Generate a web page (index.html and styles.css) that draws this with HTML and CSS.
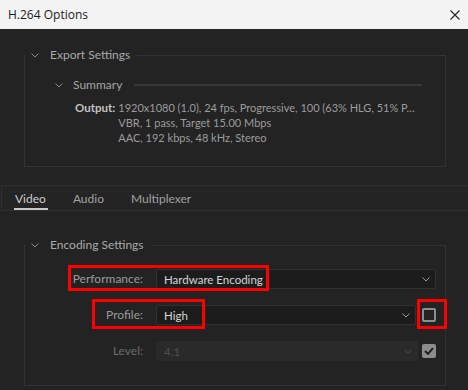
FILE: index.html
```html
<!DOCTYPE html>
<html>
<head>
<meta charset="utf-8">
<link rel="stylesheet" href="styles.css">
</head>
<body>
<div class="titlebar">
  <span class="title">H.264 Options</span>
  <svg class="close" width="10" height="10" viewBox="0 0 10 10"><path d="M0.5 0.5L9.5 9.5M9.5 0.5L0.5 9.5" stroke="#222" stroke-width="1.1" fill="none"/></svg>
</div>
<div class="main">
  <section class="group export">
    <div class="group-head">
      <svg class="chev" width="8" height="5" viewBox="0 0 8 5"><path d="M0.5 0.5L4 4L7.5 0.5" stroke="#8a8a8a" stroke-width="1" fill="none"/></svg>
      <span class="group-title">Export Settings</span>
      <span class="rule"></span>
    </div>
    <div class="sub-head">
      <svg class="chev" width="8" height="5" viewBox="0 0 8 5"><path d="M0.5 0.5L4 4L7.5 0.5" stroke="#8a8a8a" stroke-width="1" fill="none"/></svg>
      <span class="group-title">Summary</span>
      <span class="rule thick"></span>
    </div>
    <div class="summary">
      <span class="sum-label">Output:</span>
      <div class="sum-values">
        <div>1920x1080 (1.0), 24 fps, Progressive, 100 (63% HLG, 51% P…</div>
        <div>VBR, 1 pass, Target 15.00 Mbps</div>
        <div>AAC, 192 kbps, 48 kHz, Stereo</div>
      </div>
    </div>
  </section>

  <nav class="tabs">
    <span class="tab active">Video</span>
    <span class="tab">Audio</span>
    <span class="tab">Multiplexer</span>
  </nav>

  <section class="group encoding">
    <div class="group-head">
      <svg class="chev" width="8" height="5" viewBox="0 0 8 5"><path d="M0.5 0.5L4 4L7.5 0.5" stroke="#8a8a8a" stroke-width="1" fill="none"/></svg>
      <span class="group-title">Encoding Settings</span>
      <span class="rule"></span>
    </div>
    <div class="form">
      <label class="lbl">Performance:</label>
      <div class="select wide"><span>Hardware Encoding</span><svg width="8" height="5" viewBox="0 0 8 5"><path d="M0.5 0.5L4 4L7.5 0.5" stroke="#9a9a9a" stroke-width="1" fill="none"/></svg></div>

      <label class="lbl">Profile:</label>
      <div class="select"><span>High</span><svg width="8" height="5" viewBox="0 0 8 5"><path d="M0.5 0.5L4 4L7.5 0.5" stroke="#9a9a9a" stroke-width="1" fill="none"/></svg></div>
      <span class="check"></span>

      <label class="lbl dim">Level:</label>
      <div class="select disabled"><span>4.1</span><svg width="8" height="5" viewBox="0 0 8 5"><path d="M0.5 0.5L4 4L7.5 0.5" stroke="#4a4a4a" stroke-width="1" fill="none"/></svg></div>
      <span class="check checked"><svg width="10" height="8" viewBox="0 0 10 8"><path d="M1 4L4 6.8L9 1.2" stroke="#1e1e1e" stroke-width="2" fill="none"/></svg></span>
    </div>
    <div class="mark mark-perf"></div>
    <div class="mark mark-profile"></div>
    <div class="mark mark-check"></div>
  </section>
</div>
</body>
</html>
```

FILE: styles.css
```css
html, body {
  margin: 0;
  padding: 0;
}
body {
  width: 468px;
  height: 390px;
  overflow: hidden;
  background: #232323;
  font-family: Lato, "Noto Sans", sans-serif;
  font-size: 12px;
}
.titlebar {
  height: 29px;
  background: #f3f3f3;
  display: flex;
  align-items: center;
  justify-content: space-between;
  padding: 0 8px 0 8px;
  font-family: "Open Sans", "Noto Sans", sans-serif;
  font-size: 12px;
  color: #1b1b1b;
}
.close {
  display: block;
  margin-top: 1px;
}
.main {
  display: flex;
  flex-direction: column;
}
.group {
  position: relative;
  display: flex;
  flex-direction: column;
  border: 1px solid #333333;
  border-top: none;
  margin-left: 24px;
  margin-right: 22px;
}
.export {
  margin-top: 26px;
  padding-bottom: 21px;
}
.group-head, .sub-head {
  display: flex;
  align-items: center;
  height: 14px;
}
.group-head {
  margin-top: -7px;
  padding-left: 6px;
}
.chev {
  display: block;
  flex: none;
}
.group-title {
  color: #a9a9a9;
  margin-left: 11px;
  line-height: 14px;
  white-space: nowrap;
}
.rule {
  flex: 1;
  height: 1px;
  background: #333333;
  margin-left: 7px;
}
.rule.thick {
  height: 2px;
  background: #383838;
  margin-right: 23px;
}
.sub-head {
  margin-top: 16px;
  padding-left: 30px;
}
.sub-head .group-title {
  margin-left: 10px;
  color: #a4a4a4;
}
.sub-head .rule {
  margin-left: 12px;
}
.summary {
  display: flex;
  margin-top: 8px;
  padding-left: 50px;
  line-height: 15px;
  font-size: 11px;
}
.sum-label {
  color: #c2c2c2;
  font-weight: bold;
  font-size: 11.5px;
  margin-right: 3px;
}
.sum-values {
  color: #9c9c9c;
  white-space: nowrap;
}
.tabs {
  display: flex;
  margin-top: 18px;
  margin-left: 1px;
  border-top: 1px solid #303030;
  border-bottom: 1px solid #303030;
  border-left: 1px solid #303030;
  background: #242424;
  padding-left: 12px;
  gap: 24px;
}
.tab {
  padding: 6px 2px 2px 1px;
  line-height: 14px;
  color: #a0a0a0;
  border-bottom: 2px solid transparent;
}
.tab.active {
  color: #cccccc;
  border-bottom-color: #c8c8c8;
}
.encoding {
  margin-top: 34px;
  padding-bottom: 24px;
}
.form {
  display: grid;
  grid-template-columns: 125px 1fr 14px;
  column-gap: 6px;
  row-gap: 16px;
  margin-top: 17px;
  padding-right: 9px;
  align-items: center;
}
.lbl {
  color: #9a9a9a;
  text-align: right;
  margin-right: 7px;
  grid-column: 1;
  line-height: 20px;
}
.lbl.dim {
  color: #6c6c6c;
}
.select {
  grid-column: 2;
  height: 20px;
  box-sizing: border-box;
  background: #1c1c1c;
  border: 1px solid #303030;
  border-radius: 2px;
  display: flex;
  align-items: center;
  justify-content: space-between;
  padding: 0 5px 0 7px;
  color: #d6d6d6;
  font-size: 11.5px;
}
.select.wide {
  grid-column: 2 / 4;
}
.select.disabled {
  background: #2a2a2a;
  border-color: #2a2a2a;
  color: #4e4e4e;
  margin-right: -2px;
}
.select svg {
  display: block;
}
.check {
  grid-column: 3;
  width: 14px;
  height: 14px;
  box-sizing: border-box;
  border: 2px solid #8e8e8e;
  border-radius: 2px;
}
.check.checked {
  background: #8c8c8c;
  border: none;
  display: flex;
  align-items: center;
  justify-content: center;
}
.check.checked svg {
  display: block;
}
.mark {
  position: absolute;
  box-sizing: border-box;
  border: 3px solid #ff0000;
}
.mark-perf {
  left: 43px;
  top: 20px;
  width: 201px;
  height: 26px;
}
.mark-profile {
  left: 67px;
  top: 54px;
  width: 113px;
  height: 30px;
}
.mark-check {
  left: 392px;
  top: 54px;
  width: 30px;
  height: 30px;
}
```
